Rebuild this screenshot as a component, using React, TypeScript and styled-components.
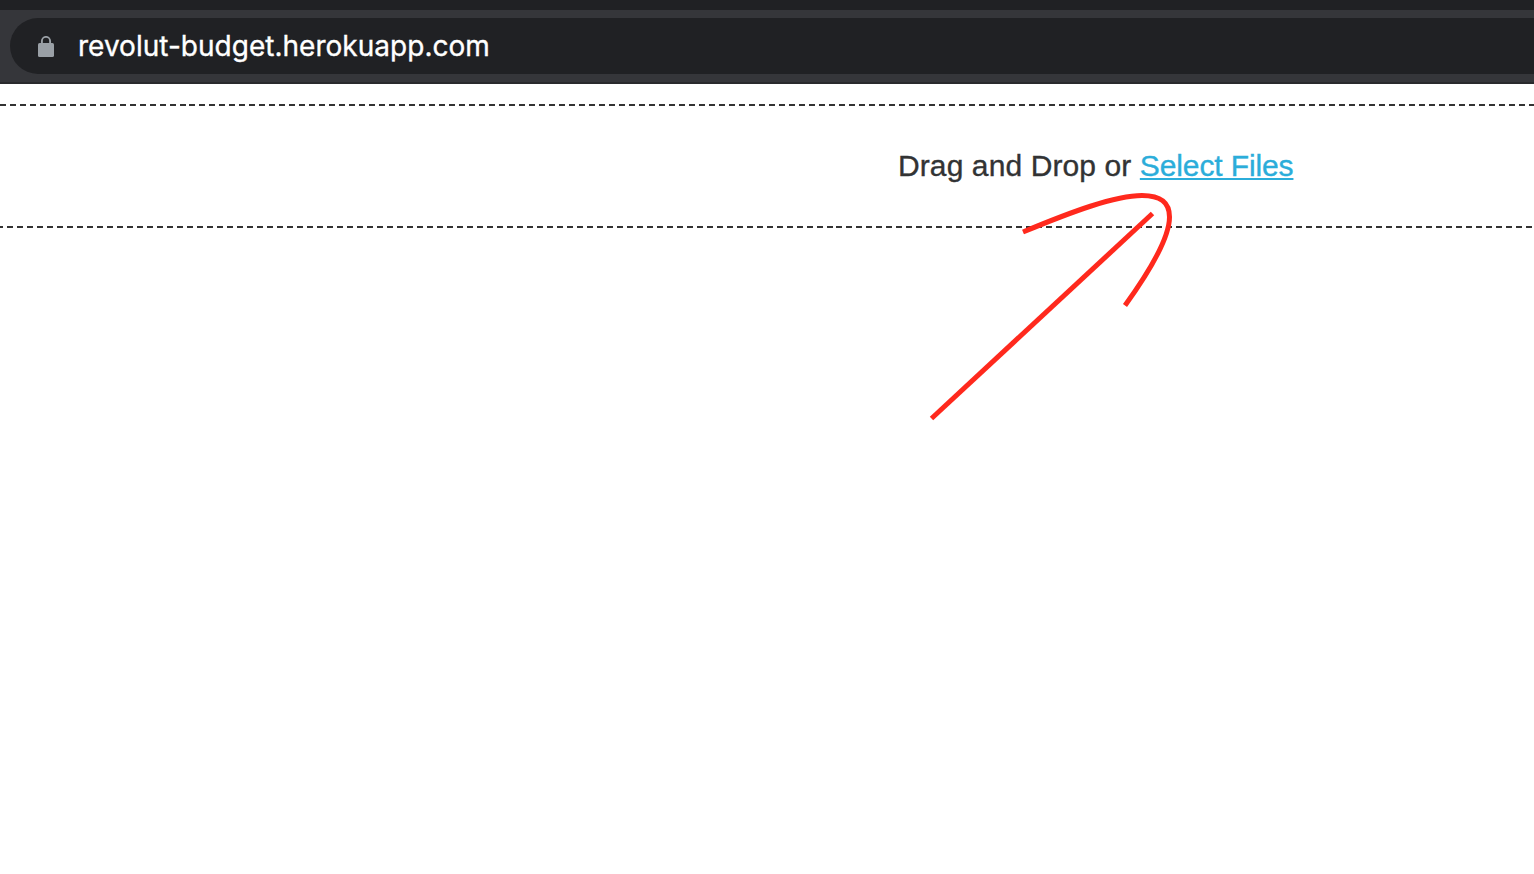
import styled, { createGlobalStyle } from "styled-components";

const GlobalStyle = createGlobalStyle`
  * { box-sizing: border-box; }
  html, body { margin: 0; background: #fff; overflow: hidden; }
`;

const Page = styled.div`
  position: relative;
  display: flex;
  flex-direction: column;
  width: 100%;
  height: 874px;
  overflow: hidden;
`;

const TabStrip = styled.div`
  height: 10px;
  background: #202124;
`;

const Toolbar = styled.header`
  height: 74px;
  padding: 8px 0 8px 10px;
  background: #35363a;
  border-bottom: 2px solid #292a2d;
`;

const AddressBar = styled.div`
  display: flex;
  align-items: center;
  height: 56px;
  padding-left: 28px;
  border-radius: 28px 0 0 28px;
  background: #202124;
`;

const LockIcon = styled.svg`
  display: block;
  flex: none;
  width: 16px;
  height: 22px;
  margin-top: 2px;
`;

const Url = styled.span`
  margin-left: 24px;
  color: #fff;
  font: 400 28px/36px Inter, sans-serif;
  letter-spacing: 0.02px;
  -webkit-text-stroke: 0.35px currentColor;
  white-space: nowrap;
`;

const DropZone = styled.main`
  margin-top: 20px;
`;

const DashedRule = styled.div<{ $offset: number }>`
  height: 2px;
  background: repeating-linear-gradient(90deg, #333 0 6px, transparent 6px 9.994px);
  background-position-x: ${(p) => p.$offset}px;
  background-size: 1598.4px 2px;
`;

const Prompt = styled.p`
  height: 120px;
  margin: 0;
  padding-left: 898px;
  color: #323334;
  font: 400 30px/120px "Liberation Sans", Arial, sans-serif;
  letter-spacing: 0.1px;
  -webkit-text-stroke: 0.35px currentColor;
  white-space: nowrap;
`;

const SelectLink = styled.a`
  color: #2badda;
  letter-spacing: -0.12px;
  text-decoration: underline;
  text-decoration-thickness: 2px;
  text-underline-offset: 2px;
  text-decoration-skip-ink: none;
`;

const Arrow = styled.svg`
  position: absolute;
  left: 920px;
  top: 180px;
  width: 270px;
  height: 250px;
  pointer-events: none;
`;

export default function App() {
  return (
    <Page>
      <GlobalStyle />
      <TabStrip />
      <Toolbar>
        <AddressBar>
          <LockIcon viewBox="0 0 16 22">
            <rect y="7" width="16" height="14" rx="1.6" fill="#9aa0a6" />
            <path d="M3.9 8V5a4.100 4.100 0 0 1 8.200 0v3" fill="none" stroke="#9aa0a6" strokeWidth="1.9" />
          </LockIcon>
          <Url>revolut-budget.herokuapp.com</Url>
        </AddressBar>
      </Toolbar>
      <DropZone>
        <DashedRule $offset={-0.4} />
        <Prompt>
          Drag and Drop or <SelectLink>Select Files</SelectLink>
        </Prompt>
        <DashedRule $offset={-3} />
      </DropZone>
      <Arrow viewBox="920 180 270 250" fill="none" stroke="#ff291d" strokeWidth="5">
        <path d="M931.5 418.5L1152.5 213.5" />
        <path d="M1023 232C1071 212 1115 195.500 1142 195.500C1160 195.500 1169.500 202 1169.500 217C1169.500 237 1152 268 1125 305.500" />
      </Arrow>
    </Page>
  );
}
